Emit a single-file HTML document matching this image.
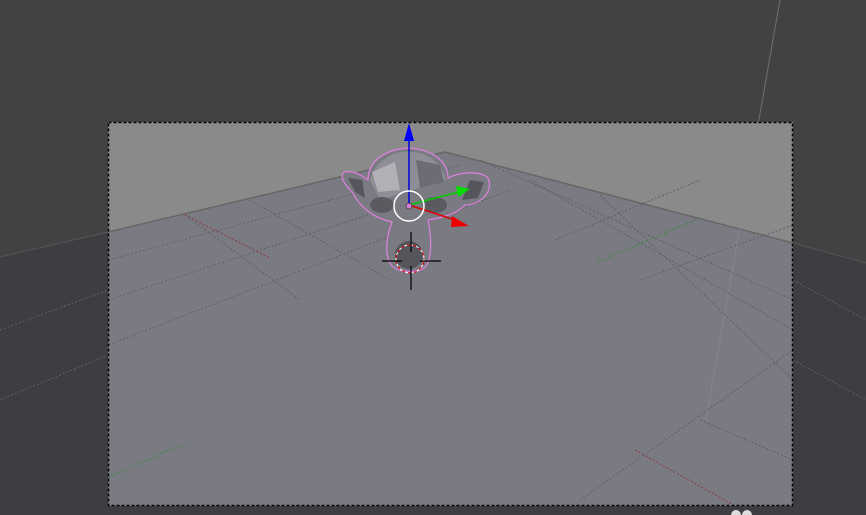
<!DOCTYPE html>
<html><head><style>html,body{margin:0;padding:0;background:#414141;overflow:hidden}svg{display:block}</style></head>
<body>
<svg width="866" height="515" viewBox="0 0 866 515" xmlns="http://www.w3.org/2000/svg">
<rect width="866" height="515" fill="#424242"/>
<polygon points="0,257 108,232 108,515 0,515" fill="#3d3d42"/>
<polygon points="793,243 866,263 866,515 793,515" fill="#3d3d42"/>
<rect x="108" y="506" width="685" height="9" fill="#3d3d42"/>
<line x1="0" y1="257" x2="108" y2="232" stroke="#555" stroke-width="1"/>
<line x1="793" y1="243" x2="866" y2="263" stroke="#555" stroke-width="1"/>
<rect x="108" y="122" width="685" height="384" fill="#8a8a8a"/>
<polygon points="108,232 445,152 793,243 793,506 108,506" fill="#7a7a83"/>
<polyline points="108,232 445,152 793,243" fill="none" stroke="#666" stroke-width="1.5"/>
<line x1="780" y1="0" x2="706" y2="420" stroke="#8e8e96" stroke-width="1" opacity="0.6"/>
<g stroke="#5f5f66" stroke-width="1" stroke-dasharray="2,2" fill="none">
<line x1="108" y1="260" x2="460" y2="165"/>
<line x1="108" y1="300" x2="480" y2="178"/>
<line x1="108" y1="345" x2="510" y2="190"/>
<line x1="480" y1="160" x2="793" y2="300"/>
<line x1="530" y1="180" x2="793" y2="330"/>
<line x1="600" y1="195" x2="793" y2="380"/>
<line x1="185" y1="215" x2="300" y2="300"/>
<line x1="250" y1="200" x2="390" y2="280"/>
<line x1="555" y1="240" x2="700" y2="180"/>
<line x1="640" y1="280" x2="793" y2="225"/>
<line x1="580" y1="500" x2="793" y2="350"/>
<line x1="700" y1="420" x2="793" y2="460"/>
<line x1="793" y1="280" x2="866" y2="320"/>
<line x1="793" y1="360" x2="866" y2="400"/>
<line x1="0" y1="330" x2="108" y2="290"/>
<line x1="0" y1="400" x2="108" y2="355"/>
</g>
<line x1="185" y1="215" x2="270" y2="258" stroke="#8a3a3a" stroke-dasharray="2,2"/>
<line x1="635" y1="450" x2="735" y2="506" stroke="#8a3a3a" stroke-dasharray="2,2"/>
<line x1="598" y1="262" x2="700" y2="218" stroke="#3a8a3a" stroke-dasharray="2,2"/>
<line x1="108" y1="478" x2="185" y2="443" stroke="#3a8a3a" stroke-dasharray="2,2"/>
<rect x="108.5" y="122.5" width="684" height="383" fill="none" stroke="#000" stroke-width="1.5" stroke-dasharray="3,2"/>
<g stroke="#e080e0" stroke-width="1.2">
<path d="M352,192 C345,185 338,175 345,172 C355,170 362,176 368,180 C368,165 380,150 408,148 C438,150 448,165 448,178 C460,172 480,170 488,178 C494,192 480,205 465,205 C455,215 440,218 428,220 C432,240 432,262 424,268 C414,274 398,272 392,266 C385,258 385,240 392,222 C375,218 362,210 352,192 Z" fill="#7a7a82"/>
</g>
<path d="M370,180 C375,160 395,150 410,152 C430,152 442,165 446,180 L412,190 L380,200 Z" fill="#8e8e96"/>
<path d="M372,172 L395,162 L400,190 L378,192 Z" fill="#b0b0b5"/>
<path d="M416,160 L440,165 L444,182 L420,188 Z" fill="#6c6c74"/>
<path d="M348,178 L362,180 L365,198 L355,192 Z" fill="#55555c"/>
<path d="M470,180 L484,182 L478,198 L462,200 Z" fill="#55555c"/>
<ellipse cx="382" cy="205" rx="12" ry="8" fill="#5a5a61"/>
<ellipse cx="435" cy="205" rx="12" ry="8" fill="#5a5a61"/>
<ellipse cx="409" cy="255" rx="14" ry="14" fill="#55555c"/>
<line x1="409" y1="205" x2="409" y2="138" stroke="#0000dd" stroke-width="1.5"/>
<polygon points="409,123 404,141 414,141" fill="#0000ff"/>
<line x1="409" y1="205" x2="462" y2="191" stroke="#00cc00" stroke-width="1.5"/>
<polygon points="470,189 456,186 458,197" fill="#00dd00"/>
<line x1="409" y1="205" x2="455" y2="220" stroke="#dd0000" stroke-width="1.5"/>
<polygon points="469,226 452,216 451,227" fill="#ee0000"/>
<circle cx="409" cy="206" r="15" fill="none" stroke="#fff" stroke-width="1.5"/>
<circle cx="409" cy="206" r="3" fill="#d080d0" stroke="#000" stroke-width=".5"/>
<circle cx="410" cy="259" r="14" fill="none" stroke="#fff" stroke-dasharray="3,3"/>
<circle cx="410" cy="259" r="14" fill="none" stroke="#e00" stroke-dasharray="3,3" stroke-dashoffset="3"/>
<g stroke="#000" stroke-width="1.2">
<line x1="411" y1="232" x2="411" y2="252"/>
<line x1="411" y1="266" x2="411" y2="290"/>
<line x1="382" y1="261" x2="402" y2="261"/>
<line x1="420" y1="261" x2="441" y2="261"/>
</g>
<circle cx="736" cy="515" r="5" fill="#ddd"/><circle cx="747" cy="515" r="5" fill="#ddd"/>
</svg>
</body></html>
